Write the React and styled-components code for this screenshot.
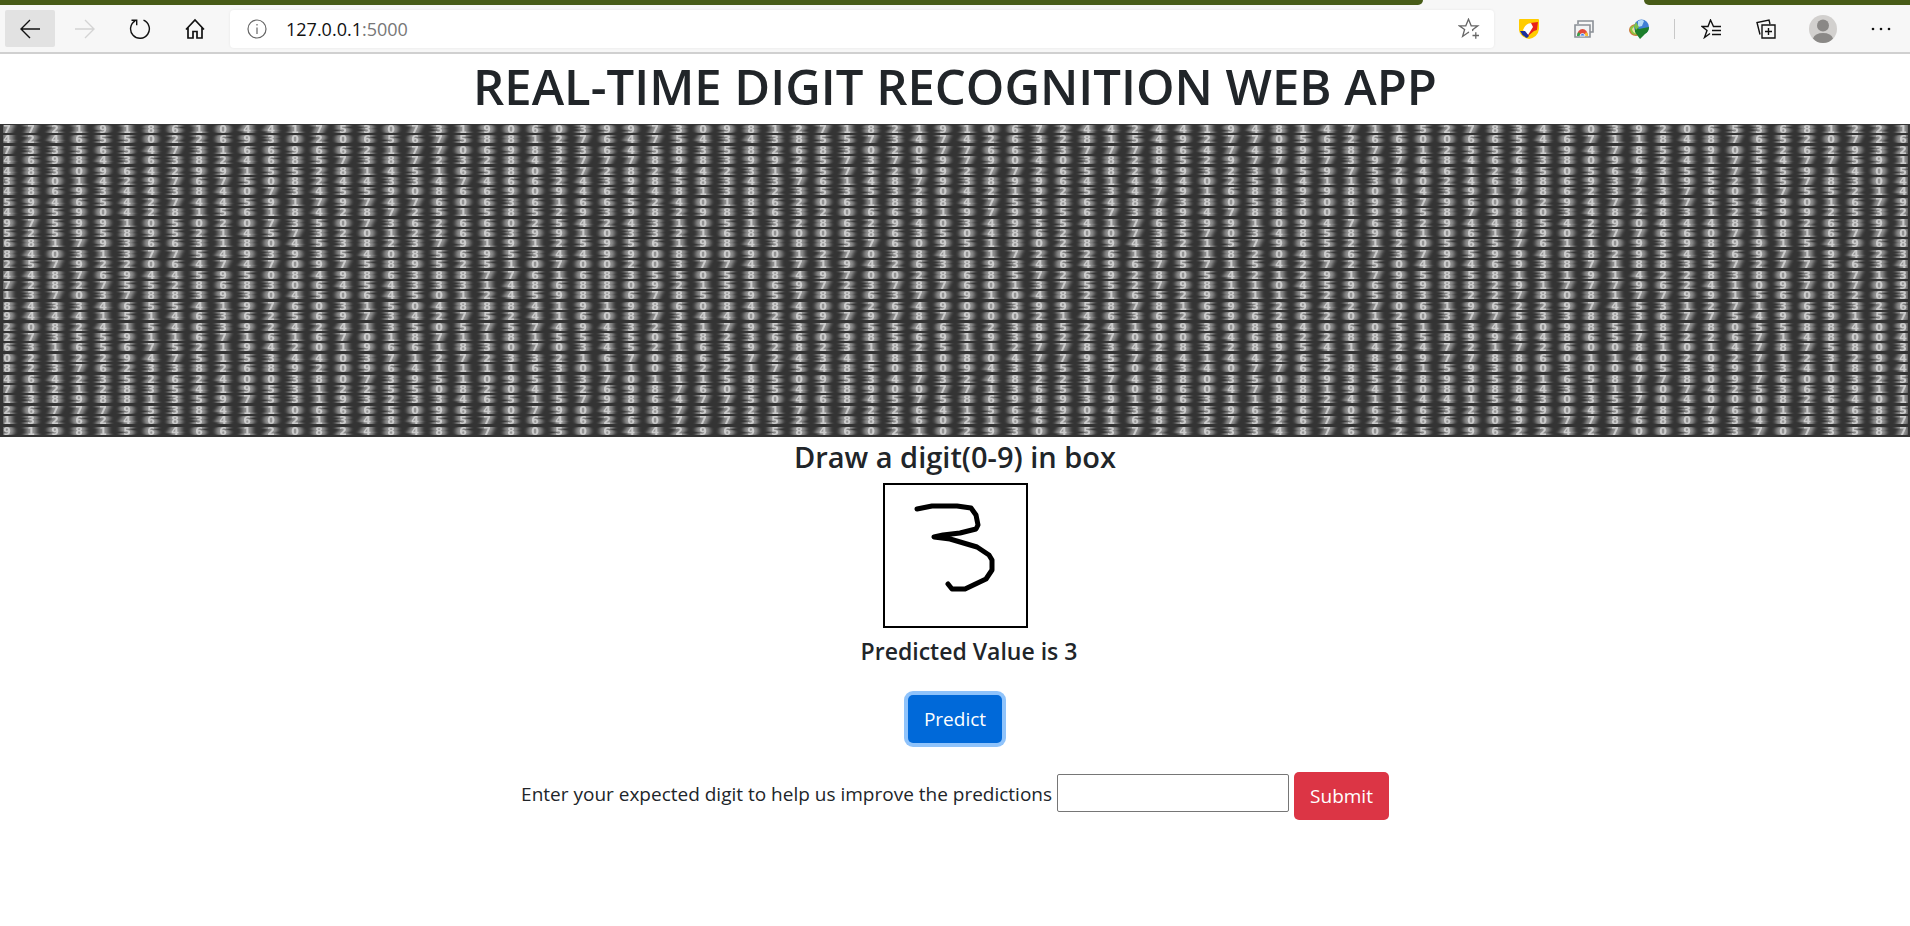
import React, { useState } from "react";
import styled, { createGlobalStyle } from "styled-components";

const GlobalStyle = createGlobalStyle`
  *, *::before, *::after { box-sizing: border-box; }
  body {
    margin: 0;
    background: #fff;
    color: #212529;
    font-family: "Open Sans", "Noto Sans", sans-serif;
    font-size: 19px;
    line-height: 30px;
  }
  button, input { font: inherit; }
`;

/* ---------- browser chrome ---------- */

const TabStrip = styled.div`
  display: flex;
  height: 5px;
  background: #f7f7f7;
`;

const StripSegment = styled.div`
  flex: ${(p) => p.$grow} 1 0;
  background: ${(p) => (p.$gap ? "transparent" : "#485c18")};
  border-radius: ${(p) => p.$radius || "0"};
`;

const Toolbar = styled.nav`
  display: flex;
  align-items: center;
  height: 49px;
  padding: 0 2px 0 5px;
  background: #f7f7f7;
  border-bottom: 2px solid #d0d0d0;
`;

const ToolButton = styled.button`
  display: flex;
  align-items: center;
  justify-content: center;
  flex: none;
  width: ${(p) => p.$width || "55px"};
  height: 37px;
  padding: 0;
  border: 0;
  border-radius: 2px;
  background: ${(p) => (p.$active ? "#e2e2e2" : "transparent")};
  color: ${(p) => p.$color || "#111"};
`;

const NavGroup = styled.div`
  display: flex;
  flex: none;
  gap: 5px;
  width: 225px;
`;

const AddressBar = styled.div`
  display: flex;
  align-items: center;
  flex: 1;
  height: 38px;
  margin-right: 7px;
  padding-left: 14px;
  background: #fff;
  border-radius: 4px;
  box-shadow: 0 0 3px rgba(0, 0, 0, 0.07);
`;

const Address = styled.a`
  flex: 1;
  margin-left: 16px;
  color: #111;
  font-size: 18px;
  text-decoration: none;
`;

const Port = styled.span`
  color: #777;
`;

const Separator = styled.div`
  width: 1px;
  height: 20px;
  margin: 0 8px;
  background: #c8c8c8;
`;

/* ---------- page ---------- */

const Page = styled.main`
  display: flex;
  flex-direction: column;
  align-items: center;
`;

const Title = styled.h1`
  margin: 0 0 8px;
  padding-top: 2px;
  font-size: 49px;
  line-height: 60px;
  font-weight: 600;
`;

const Banner = styled.svg`
  display: block;
  width: 100%;
  height: 313px;
  background: #343434;
`;

const BannerRow = styled.text`
  font-family: "DejaVu Sans", sans-serif;
  font-size: 11px;
  font-weight: 700;
  fill: #e4e4e4;
  text-anchor: middle;
`;

const Subtitle = styled.h4`
  margin: 0 0 8px;
  padding-top: 2px;
  font-size: 29px;
  line-height: 36px;
  font-weight: 600;
`;

const DrawingBox = styled.svg`
  display: block;
  width: 145px;
  height: 145px;
  border: 2px solid #000;
`;

const Prediction = styled.h5`
  margin: 8px 0 29px;
  padding-left: 28px;
  font-size: 23px;
  line-height: 30px;
  font-weight: 600;
`;

const ActionButton = styled.button`
  height: 48px;
  padding: 0 16px;
  border: 0;
  border-radius: 5px;
  background: ${(p) => (p.$danger ? "#dc3545" : "#0069d9")};
  box-shadow: ${(p) => (p.$focused ? "0 0 0 4px #8fc3fb" : "none")};
  color: #fff;
`;

const FeedbackForm = styled.form`
  display: flex;
  align-items: center;
  gap: 5px;
  margin-top: 29px;
`;

const FeedbackLabel = styled.label`
  padding-bottom: 4px;
`;

const FeedbackInput = styled.input`
  width: 232px;
  height: 38px;
  margin-bottom: 6px;
  padding: 0 4px;
  border: 1px solid #767676;
  border-radius: 2px;
  background: #fff;
`;

const DIGITS = [
  "77219186104417530731906039973098127182191067244244194" + "814711527834303920653681221",
  "42465502269302065675881276475434385573474263281549277" + "056266006654671184876520726",
  "73356547316696621770698336458358268302077663377786474" + "895873125521947859905262932",
  "46984363824685738723284277789839925737597904038285297" + "787397684663809624175477591",
  "48309642991552814516580372824423195752092772658269323" + "059752461245056435575591405",
  "34014297675082443347466243985834376148793899641444025" + "141130024688693719521578304",
  "48693443840734559086690946448138235353204219253479168" + "899801439178623237601755214",
  "59465427445917974760636166524018620618884755864873805" + "830893796002947147554901679",
  "49590428156184287251585293982983632066919799567389478" + "800199587980348283125992532",
  "97599105020735073626602542431051328629403495541763991" + "094763294485429044481026891",
  "52595895214573201226639910332168000686350486200735703" + "485896106179027766071816770",
  "68179366318045382379191259561984388576095180289432157" + "965212056576110939899154968",
  "84031377549393540856953449908009012703840172626180182" + "046673795994682954369719423",
  "25792206474709758952510700203774171942638934649675715" + "427250404693871883572775634",
  "44876944595084986388776168355058849700286857269280542" + "129179585813191422838038713",
  "72827552868306454333148688092151697237876013755279811" + "045966988291777962410970709",
  "13703788393045064501245988678589578863709104821652981" + "152058332278081779915608263",
  "84334655419760315048884191986084840626490039958781693" + "294270619622974531271365326",
  "94441514636256973427524160873440269797879002146362696" + "262012037753388367754969157",
  "20824154639242413505757494323179537955463238524199308" + "940605113410985187805588409",
  "27355911671616701871181553505823660985691939227000646" + "822883589944865752267148004",
  "63165675219420196618307034521639282318251127783428328" + "954142472172600810147875803",
  "02122947515344037127233216708657243418108047795784144" + "265189977886011402027123294",
  "82376233826892096411116301103221754850809433535043407" + "762834159300300053391341804",
  "46423526240038073951095137011158509534732482237438035" + "089352893521658778097600325",
  "71212835419531225508204126987603541890077136511086047" + "181941080884311107425363917",
  "13898813597531932334651579864775046845758698939196311" + "882411441543035704000826401",
  "26777953841106665096407904987522171722641564904349596" + "267065632899045783760113685",
  "13262468346021348455756462607773521883602166221683273" + "267524660090778680934843387",
  "91981564661208248486780506442969584602102930453724633" + "487602599622427009937073587",
];

const COLUMN_POSITIONS = Array.from({ length: 80 }, (_, i) => 7 + i * 24).join(" ");

function DigitBanner() {
  return (
    <Banner viewBox="0 0 1910 313" preserveAspectRatio="xMidYMid slice" role="img" aria-label="Digits">
      <defs>
        <filter id="glow" x="0" y="0" width="100%" height="100%" colorInterpolationFilters="sRGB">
          <feMorphology in="SourceGraphic" operator="dilate" radius="4 0" result="spread" />
          <feGaussianBlur in="spread" stdDeviation="2 0" result="soft" />
          <feComponentTransfer in="soft" result="wide">
            <feFuncA type="linear" slope="0.55" />
          </feComponentTransfer>
          <feComponentTransfer in="SourceGraphic" result="core">
            <feFuncA type="linear" slope="0.7" />
          </feComponentTransfer>
          <feMerge>
            <feMergeNode in="wide" />
            <feMergeNode in="core" />
          </feMerge>
        </filter>
      </defs>
      <g filter="url(#glow)">
        {DIGITS.map((row, i) => (
          <BannerRow key={i} x={COLUMN_POSITIONS} y={Math.round(9 + i * 10.4)}>
            {row}
          </BannerRow>
        ))}
      </g>
    </Banner>
  );
}

/* ---------- icons ---------- */

const Icon = ({ size = 20, children, ...rest }) => (
  <svg
    width={size}
    height={size}
    viewBox={`0 0 ${size} ${size}`}
    fill="none"
    stroke="currentColor"
    strokeWidth="1.4"
    aria-hidden="true"
    {...rest}
  >
    {children}
  </svg>
);

const BackIcon = () => (
  <Icon><path d="M20 10H1M10 1L1 10l9 9" /></Icon>
);
const ForwardIcon = () => (
  <Icon><path d="M0 10h19M10 1l9 9-9 9" /></Icon>
);
const RefreshIcon = () => (
  <Icon size={22}><path d="M14.5 2.2A9.4 9.4 0 1 1 6.2 2.8M2.5 2.2h5.2v5" /></Icon>
);
const HomeIcon = () => (
  <Icon size={22} strokeWidth="1.7"><path d="M2 11.5L11 2l9 9.5M4 9.5V20h5v-6.5h4V20h5V9.5" /></Icon>
);
const InfoIcon = () => (
  <Icon stroke="#666" strokeWidth="1.2"><circle cx="10" cy="10" r="9" /><path d="M10 8.5V15M10 5v1.6" /></Icon>
);
const StarAddIcon = () => (
  <Icon size={22} strokeWidth="1.3">
    <path d="M11 14.6L10.5 14.3 4.6 18.5 6.6 11.5 1.2 7.8H7.8L10.5 1.2l2.7 6.6h6.6l-5.2 4 .3 1.2M14.500 17.500h6.500M17.800 14.200v6.500" />
  </Icon>
);
const RocketIcon = () => (
  <Icon stroke="none">
    <path d="M0 1Q0 0 1 0H19Q20 0 20 1V10Q19 18 10 20 1 18 0 11z" fill="#fc0" />
    <path d="M11 4L19 3 18 11 15 12 9 17 6 13z" fill="#e8201c" />
    <path d="M12 4L14 8 9 16 4 11Q6 5 12 4z" fill="#fff" />
    <path d="M1 12h5l4 5-2 2Q3 17 1 12z" fill="#1b2f9c" />
  </Icon>
);
const CastIcon = () => (
  <Icon stroke="#8b9097" strokeWidth="1.6">
    <path d="M4 5V2h15v11h-3" />
    <path d="M1 6h15v12H1z" fill="#f1f3f4" />
    <path d="M3 17a5.5 7 0 0 1 11 0z" fill="#e24a3b" stroke="none" />
    <path d="M3 17q0-3 2-4l2 4z" fill="#2fa550" stroke="none" />
    <path d="M14 17q0-3-2-4l-2 4z" fill="#fbc02d" stroke="none" />
    <path d="M6 17a2.5 2.5 0 0 1 5 0z" fill="#4080e8" stroke="#fff" strokeWidth="0.8" />
  </Icon>
);
const GlobeIcon = () => (
  <Icon stroke="none">
    <ellipse cx="7" cy="11" rx="7" ry="6" fill="#c9793a" />
    <path d="M1 9Q4 5 9 7L7 16Q1 15 1 9z" fill="#8cc63f" />
    <path d="M3 10q2-3 5-2v6q-4 1-5-4z" fill="#e9e2a0" />
    <circle cx="12.5" cy="8" r="7.5" fill="#3f7fd6" />
    <path d="M9 2q4-2 6 0l-2 5-4 1z" fill="#b5dbf5" />
    <path d="M6 7l4 3 10-2q0 5-4 7l-5 5-5-7z" fill="#1c7f2b" />
    <path d="M7 3l3 5-3 3-2-4z" fill="#7cc04a" />
  </Icon>
);
const FavoritesIcon = () => (
  <Icon>
    <path d="M20 7.5h-7.5L9.5 1 7 7.5H1l5 4L3.5 18.5 9 14.5M11 11.5h9M11 15.5h9" />
  </Icon>
);
const CollectionsIcon = () => (
  <Icon>
    <path d="M6 6h13v13H6zM12.5 9v7M9 12.5h7M4 15.5L1 3.5 13 1l1 4" />
  </Icon>
);
const AvatarIcon = () => (
  <Icon size={28} stroke="none">
    <circle cx="14" cy="14" r="14" fill="#d2d0ce" />
    <circle cx="14" cy="10.5" r="6" fill="#8a8886" />
    <path d="M4 23.5Q6 18 14 18t10 5.5Q20 28 14 28T4 23.5z" fill="#8a8886" />
  </Icon>
);
const MoreIcon = () => (
  <Icon fill="currentColor" stroke="none">
    <circle cx="2" cy="10" r="1.3" /><circle cx="10" cy="10" r="1.3" /><circle cx="18" cy="10" r="1.3" />
  </Icon>
);

function BrowserChrome() {
  return (
    <header>
      <TabStrip>
        <StripSegment $grow={1423} $radius="0 0 5px 0" />
        <StripSegment $grow={221} $gap />
        <StripSegment $grow={266} $radius="0 0 0 5px" />
      </TabStrip>
      <Toolbar aria-label="Browser">
        <NavGroup>
          <ToolButton $active $width="50px" aria-label="Back"><BackIcon /></ToolButton>
          <ToolButton $width="50px" $color="#d4d4d4" aria-label="Forward"><ForwardIcon /></ToolButton>
          <ToolButton $width="50px" aria-label="Refresh"><RefreshIcon /></ToolButton>
          <ToolButton $width="50px" aria-label="Home"><HomeIcon /></ToolButton>
        </NavGroup>
        <AddressBar>
          <ToolButton $width="26px" aria-label="Site information"><InfoIcon /></ToolButton>
          <Address href="#">127.0.0.1<Port>:5000</Port></Address>
          <ToolButton $width="50px" $color="#666" aria-label="Add to favorites"><StarAddIcon /></ToolButton>
        </AddressBar>
        <ToolButton aria-label="Launcher extension"><RocketIcon /></ToolButton>
        <ToolButton aria-label="Media extension"><CastIcon /></ToolButton>
        <ToolButton aria-label="Download manager"><GlobeIcon /></ToolButton>
        <Separator />
        <ToolButton aria-label="Favorites"><FavoritesIcon /></ToolButton>
        <ToolButton aria-label="Collections"><CollectionsIcon /></ToolButton>
        <ToolButton $width="60px" aria-label="Profile"><AvatarIcon /></ToolButton>
        <ToolButton aria-label="Settings and more"><MoreIcon /></ToolButton>
      </Toolbar>
    </header>
  );
}

export default function App() {
  const [expected, setExpected] = useState("");
  return (
    <>
      <GlobalStyle />
      <BrowserChrome />
      <Page>
        <Title>REAL-TIME DIGIT RECOGNITION WEB APP</Title>
        <DigitBanner />
        <Subtitle>Draw a digit(0-9) in box</Subtitle>
        <DrawingBox viewBox="0 0 141 141" role="img" aria-label="Drawing area">
          <path
            d="M32 24L47 21H72L86 23 91 30 93 40 91 44 75 48 58 50 49 52 65 54 92 62 104 70 107 75V85L101 94 80 104H67L63 99"
            fill="none"
            stroke="#000"
            strokeWidth="5"
            strokeLinecap="round"
            strokeLinejoin="round"
          />
        </DrawingBox>
        <Prediction>Predicted Value is 3</Prediction>
        <ActionButton type="button" $focused>Predict</ActionButton>
        <FeedbackForm onSubmit={(e) => e.preventDefault()}>
          <FeedbackLabel htmlFor="expected">
            Enter your expected digit to help us improve the predictions
          </FeedbackLabel>
          <FeedbackInput id="expected" value={expected} onChange={(e) => setExpected(e.target.value)} />
          <ActionButton type="submit" $danger>Submit</ActionButton>
        </FeedbackForm>
      </Page>
    </>
  );
}
